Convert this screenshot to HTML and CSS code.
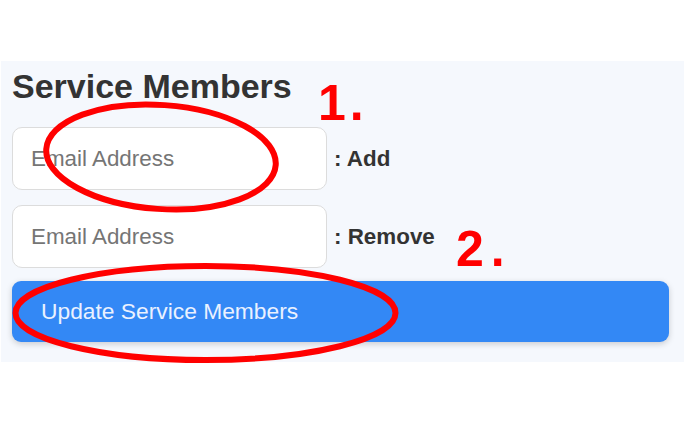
FILE: index.html
```html
<!DOCTYPE html>
<html>
<head>
<meta charset="utf-8">
<link rel="stylesheet" href="styles.css">
</head>
<body>
<div class="panel">
  <h2 class="title">Service Members</h2>
  <div class="row">
    <input class="email" type="text" placeholder="Email Address">
    <span class="label">: Add</span>
  </div>
  <div class="row">
    <input class="email" type="text" placeholder="Email Address">
    <span class="label">: Remove</span>
  </div>
  <button class="update">Update Service Members</button>
</div>
<svg class="marks" width="686" height="423" viewBox="0 0 686 423">
  <ellipse cx="161" cy="157" rx="115" ry="52" transform="rotate(4 161 157)" fill="none" stroke="#ff0000" stroke-width="6"/>
  <ellipse cx="205.5" cy="313" rx="190" ry="47" fill="none" stroke="#ff0000" stroke-width="6"/>
  <text class="num num1" x="318" y="120">1.</text>
  <text class="num num2" x="456" y="266">2.</text>
</svg>
</body>
</html>
```

FILE: styles.css
```css
html, body {
  margin: 0;
  padding: 0;
  background: #ffffff;
}
body {
  position: relative;
  width: 686px;
  height: 423px;
  overflow: hidden;
  font-family: "Liberation Sans", Arial, sans-serif;
}
.panel {
  margin: 61px 2px 0 1px;
  padding: 6px 15px 20px 11px;
  background: #f5f8fd;
  display: flex;
  flex-direction: column;
}
.title {
  margin: 0 0 21px 0;
  font-size: 34px;
  line-height: 39px;
  font-weight: bold;
  color: #333333;
}
.row {
  display: flex;
  align-items: center;
  margin-bottom: 15px;
}
.row + .row {
  margin-bottom: 13px;
}
.email {
  box-sizing: border-box;
  width: 315px;
  height: 63px;
  padding: 0 18px;
  border: 1px solid #dcdcdc;
  border-radius: 10px;
  background: #ffffff;
  font-family: "Liberation Sans", Arial, sans-serif;
  font-size: 22.4px;
  color: #333333;
  outline: none;
}
.email::placeholder {
  color: #757575;
}
.label {
  margin-left: 7px;
  font-size: 22.4px;
  font-weight: bold;
  color: #333333;
}
.update {
  box-sizing: border-box;
  width: 657px;
  height: 61px;
  padding: 0 29px;
  text-align: left;
  border: none;
  border-radius: 9px;
  background: #3388f5;
  color: #eaf1ff;
  font-family: "Liberation Sans", Arial, sans-serif;
  font-size: 22.8px;
  box-shadow: 0 2px 6px rgba(0, 0, 0, 0.18);
}
.marks {
  position: absolute;
  top: 0;
  left: 0;
  pointer-events: none;
}
.num {
  font-family: "Liberation Sans", Arial, sans-serif;
  font-weight: bold;
  font-size: 50px;
  fill: #ff0000;
}
.num1 {
  letter-spacing: 4px;
}
.num2 {
  letter-spacing: 7px;
}
```
